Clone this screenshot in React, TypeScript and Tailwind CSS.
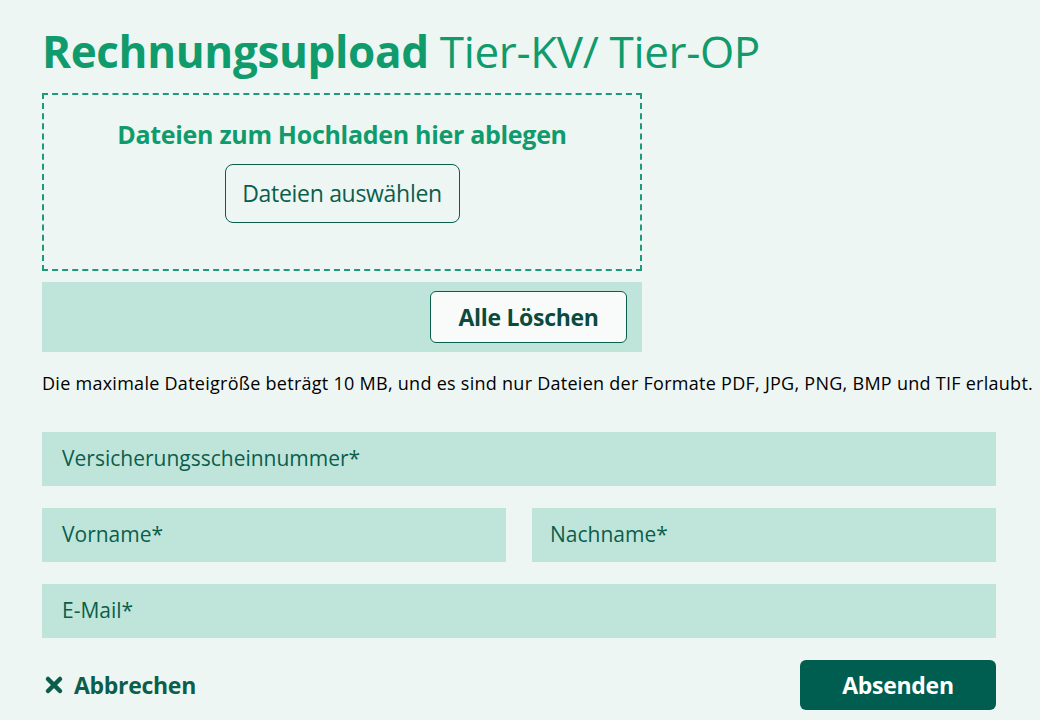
export default function App() {
  const font = { fontFamily: '"Open Sans", "Noto Sans", sans-serif' }
  return (
    <div className="min-h-screen w-full bg-[#eef6f3] text-[#0b5e4c]" style={font}>
      <div className="pl-[42px] pt-[22px] w-[996px]">
        {/* Title */}
        <h1 className="text-[44px] leading-[58px] text-[#109b6d] tracking-[-0.35px]">
          <span className="font-bold">Rechnungsupload</span> Tier-KV/ Tier-OP
        </h1>

        {/* Dropzone */}
        <div className="mt-[13px] w-[600px] h-[178px] border-2 border-dashed border-[#1d9a7c] flex flex-col items-center pt-[22px]">
          <p className="text-[25px] leading-[34px] font-bold text-[#109b6d] tracking-[-0.3px]">
            Dateien zum Hochladen hier ablegen
          </p>
          <button className="mt-[13px] w-[235px] h-[59px] rounded-[8px] border border-[#0b5e4c] text-[23px] text-[#0b5e4c] tracking-[-0.3px]">
            Dateien auswählen
          </button>
        </div>

        {/* Delete bar */}
        <div className="mt-[11px] w-[600px] h-[70px] bg-[#bfe5da] flex items-center justify-end pr-[15px]">
          <button className="w-[197px] h-[52px] rounded-[6px] border border-[#0b5e4c] bg-[#f8fbfa] text-[23px] font-bold text-[#0b4a3c] tracking-[-0.3px]">
            Alle Löschen
          </button>
        </div>

        <p className="mt-[20px] text-[18px] leading-[22px] text-black tracking-[0.27px] whitespace-nowrap">
          Die maximale Dateigröße beträgt 10 MB, und es sind nur Dateien der Formate PDF, JPG, PNG, BMP und TIF erlaubt.
        </p>

        {/* Form fields */}
        <div className="mt-[38px] flex flex-col gap-[22px]">
          <div className="h-[54px] bg-[#bfe5da] flex items-center px-[20px] text-[21px] text-[#0b5e4c]">
            Versicherungsscheinnummer*
          </div>
          <div className="grid grid-cols-2 gap-[26px]">
            <div className="h-[54px] bg-[#bfe5da] flex items-center px-[20px] text-[21px] text-[#0b5e4c]">
              Vorname*
            </div>
            <div className="h-[54px] bg-[#bfe5da] flex items-center px-[18px] text-[21px] text-[#0b5e4c]">
              Nachname*
            </div>
          </div>
          <div className="h-[54px] bg-[#bfe5da] flex items-center px-[20px] text-[21px] text-[#0b5e4c]">
            E-Mail*
          </div>
        </div>

        {/* Actions */}
        <div className="mt-[22px] flex items-center justify-between">
          <button className="flex items-center gap-[10px] pl-[2px] text-[23px] font-bold text-[#0b5e4c] tracking-[-0.3px]">
            <svg width="20" height="20" viewBox="0 0 20 20" fill="none">
              <path d="M4 4 L16 16 M16 4 L4 16" stroke="#0b5e4c" strokeWidth="4.5" strokeLinecap="round" />
            </svg>
            Abbrechen
          </button>
          <button className="w-[196px] h-[50px] rounded-[6px] bg-[#005e50] text-white text-[23px] font-bold tracking-[-0.3px]">
            Absenden
          </button>
        </div>
      </div>
    </div>
  )
}
